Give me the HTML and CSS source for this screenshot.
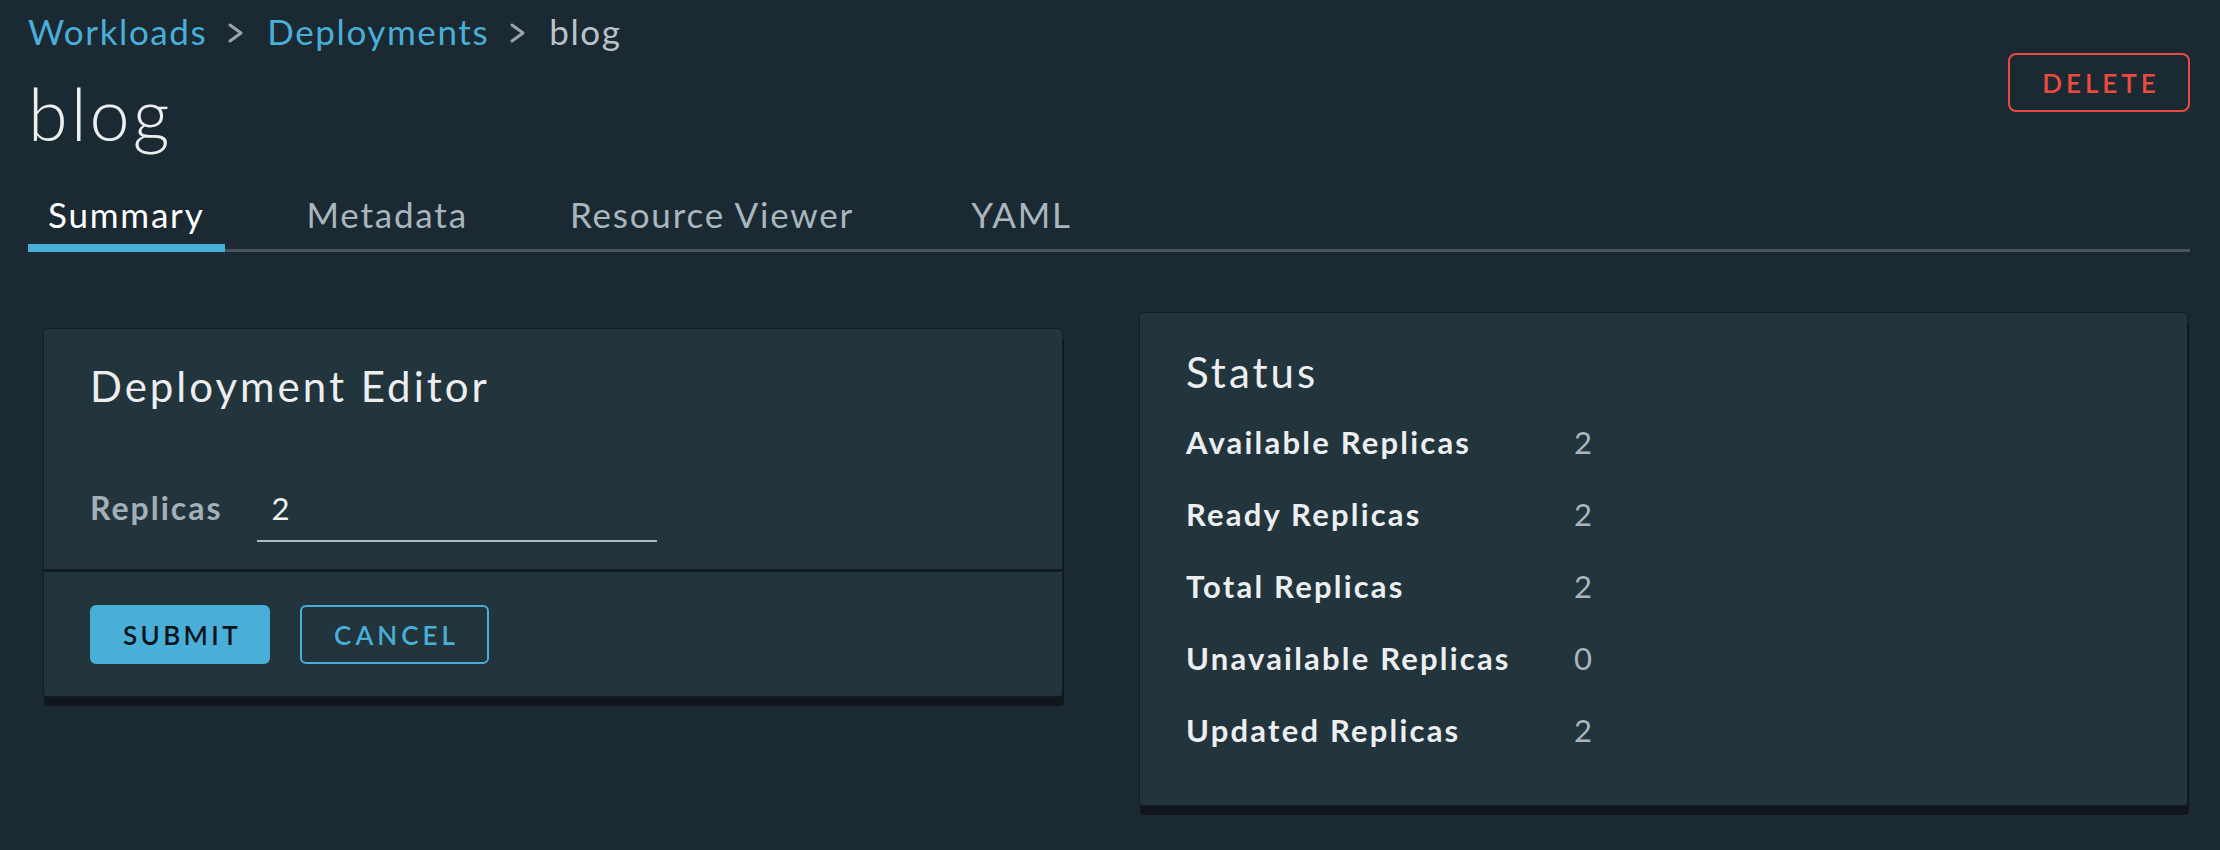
FILE: index.html
```html
<!DOCTYPE html>
<html lang="en">
<head>
<meta charset="utf-8">
<title>blog - Deployment</title>
<link rel="stylesheet" href="styles.css">
</head>
<body>
<div class="page">
  <header class="header">
    <div class="header-main">
      <nav class="breadcrumb">
        <a class="crumb-link" href="#">Workloads</a>
        <svg class="crumb-sep" viewBox="0 0 18 22" width="18" height="22" aria-hidden="true"><polyline points="3,3 14,11 3,19" fill="none" stroke="#9aa4ab" stroke-width="3" stroke-linecap="round" stroke-linejoin="round"/></svg>
        <a class="crumb-link" href="#">Deployments</a>
        <svg class="crumb-sep" viewBox="0 0 18 22" width="18" height="22" aria-hidden="true"><polyline points="3,3 14,11 3,19" fill="none" stroke="#9aa4ab" stroke-width="3" stroke-linecap="round" stroke-linejoin="round"/></svg>
        <span class="crumb-current">blog</span>
      </nav>
      <h1 class="title">blog</h1>
    </div>
    <button class="btn btn-danger-outline">DELETE</button>
  </header>

  <ul class="tabs">
    <li class="tab tab-active">Summary</li>
    <li class="tab">Metadata</li>
    <li class="tab">Resource Viewer</li>
    <li class="tab tab-wide">YAML</li>
  </ul>

  <div class="cards">
    <section class="card card-editor">
      <div class="card-block">
        <h2 class="card-title">Deployment Editor</h2>
        <div class="form-row">
          <label class="form-label" for="replicas">Replicas</label>
          <input class="form-input" id="replicas" type="text" value="2">
        </div>
      </div>
      <div class="card-footer">
        <button class="btn btn-primary">SUBMIT</button>
        <button class="btn btn-outline">CANCEL</button>
      </div>
    </section>

    <section class="card card-status">
      <h2 class="card-title">Status</h2>
      <dl class="status-list">
        <dt class="status-key">Available Replicas</dt><dd class="status-val">2</dd>
        <dt class="status-key">Ready Replicas</dt><dd class="status-val">2</dd>
        <dt class="status-key">Total Replicas</dt><dd class="status-val">2</dd>
        <dt class="status-key">Unavailable Replicas</dt><dd class="status-val">0</dd>
        <dt class="status-key">Updated Replicas</dt><dd class="status-val">2</dd>
      </dl>
    </section>
  </div>
</div>
</body>
</html>
```
FILE: styles.css
```css
* { box-sizing: border-box; }

html, body {
  margin: 0;
  padding: 0;
  background: #1b2a32;
}

body {
  font-family: Lato, "Open Sans", sans-serif;
  color: #eaedf0;
  width: 2220px;
  height: 850px;
  overflow: hidden;
}

.page {
  padding: 0 30px 0 28px;
}

/* header */
.header {
  display: flex;
  justify-content: space-between;
  align-items: flex-start;
  padding-top: 10px;
}

.breadcrumb {
  display: flex;
  align-items: center;
  font-size: 35px;
  line-height: 42px;
  letter-spacing: 1.6px;
}

.crumb-link {
  color: #49afd9;
  text-decoration: none;
}

.crumb-sep {
  margin: 4px 22px 0 20px;
}

.crumb-current {
  color: #b9c3c9;
}

.title {
  margin: 21px 0 0;
  font-size: 72px;
  line-height: 80px;
  font-weight: 300;
  letter-spacing: 3px;
  color: #eceef0;
}

/* buttons */
.btn {
  font-family: Lato, "Open Sans", sans-serif;
  font-size: 26px;
  font-weight: 600;
  letter-spacing: 4px;
  height: 59px;
  padding: 0 0 0 4px;
  border-radius: 6px;
  border: 2px solid #49afd9;
  background: transparent;
  cursor: pointer;
}

.btn-danger-outline {
  margin-top: 43px;
  width: 182px;
  border-color: #ec4a40;
  color: #ec4a40;
  border-radius: 8px;
}

.btn-primary {
  background: #49afd9;
  color: #0a1419;
  width: 180px;
  letter-spacing: 3.4px;
}

.btn-outline {
  color: #49afd9;
  width: 189px;
}

/* tabs */
.tabs {
  display: flex;
  gap: 62px;
  list-style: none;
  margin: 40px 0 0;
  padding: 0;
  border-bottom: 3px solid #485560;
}

.tab {
  padding: 0 20px 9px;
  font-size: 35px;
  line-height: 42px;
  letter-spacing: 1.8px;
  color: #a9b6be;
  border-bottom: 8px solid transparent;
  margin-bottom: -3px;
}

.tab-active {
  color: #ffffff;
  border-bottom-color: #49afd9;
}

.tab-wide {
  margin-left: 15px;
}

/* cards */
.cards {
  display: grid;
  grid-template-columns: 1020px 1049px;
  column-gap: 76px;
  align-items: start;
  margin-top: 60px;
  padding-left: 15px;
}

.card {
  background: #22343c;
  border: 1px solid #131d24;
  border-radius: 4px;
  box-shadow: 1px 9px 0 0 #0f171d;
}

.card-editor {
  margin-top: 16px;
}

.card-block {
  padding: 32px 46px 27px;
  border-bottom: 3px solid #131c23;
}

.card-title {
  margin: 0;
  font-size: 42px;
  line-height: 50px;
  font-weight: 400;
  letter-spacing: 3px;
  color: #eceef0;
}

.form-row {
  display: flex;
  align-items: baseline;
  gap: 34px;
  margin-top: 78px;
}

.form-label {
  font-size: 32px;
  line-height: 38px;
  font-weight: 700;
  letter-spacing: 2px;
  color: #a3b0b8;
}

.form-input {
  width: 400px;
  font-family: Lato, "Open Sans", sans-serif;
  font-size: 31px;
  line-height: 38px;
  height: 53px;
  padding: 0 15px 13px;
  color: #f2f4f5;
  background: transparent;
  border: none;
  border-bottom: 2px solid #adbbc4;
  outline: none;
}

.card-footer {
  display: flex;
  gap: 30px;
  padding: 33px 46px 32px;
}

.card-status {
  padding: 34px 46px 39px;
}

.status-list {
  display: grid;
  grid-template-columns: 388px 1fr;
  margin: 9px 0 0;
}

.status-key,
.status-val {
  margin: 0;
  font-size: 31px;
  line-height: 72px;
}

.status-key {
  font-weight: 700;
  color: #eceef0;
  letter-spacing: 2.2px;
}

.status-val {
  color: #a9b6be;
}
```
